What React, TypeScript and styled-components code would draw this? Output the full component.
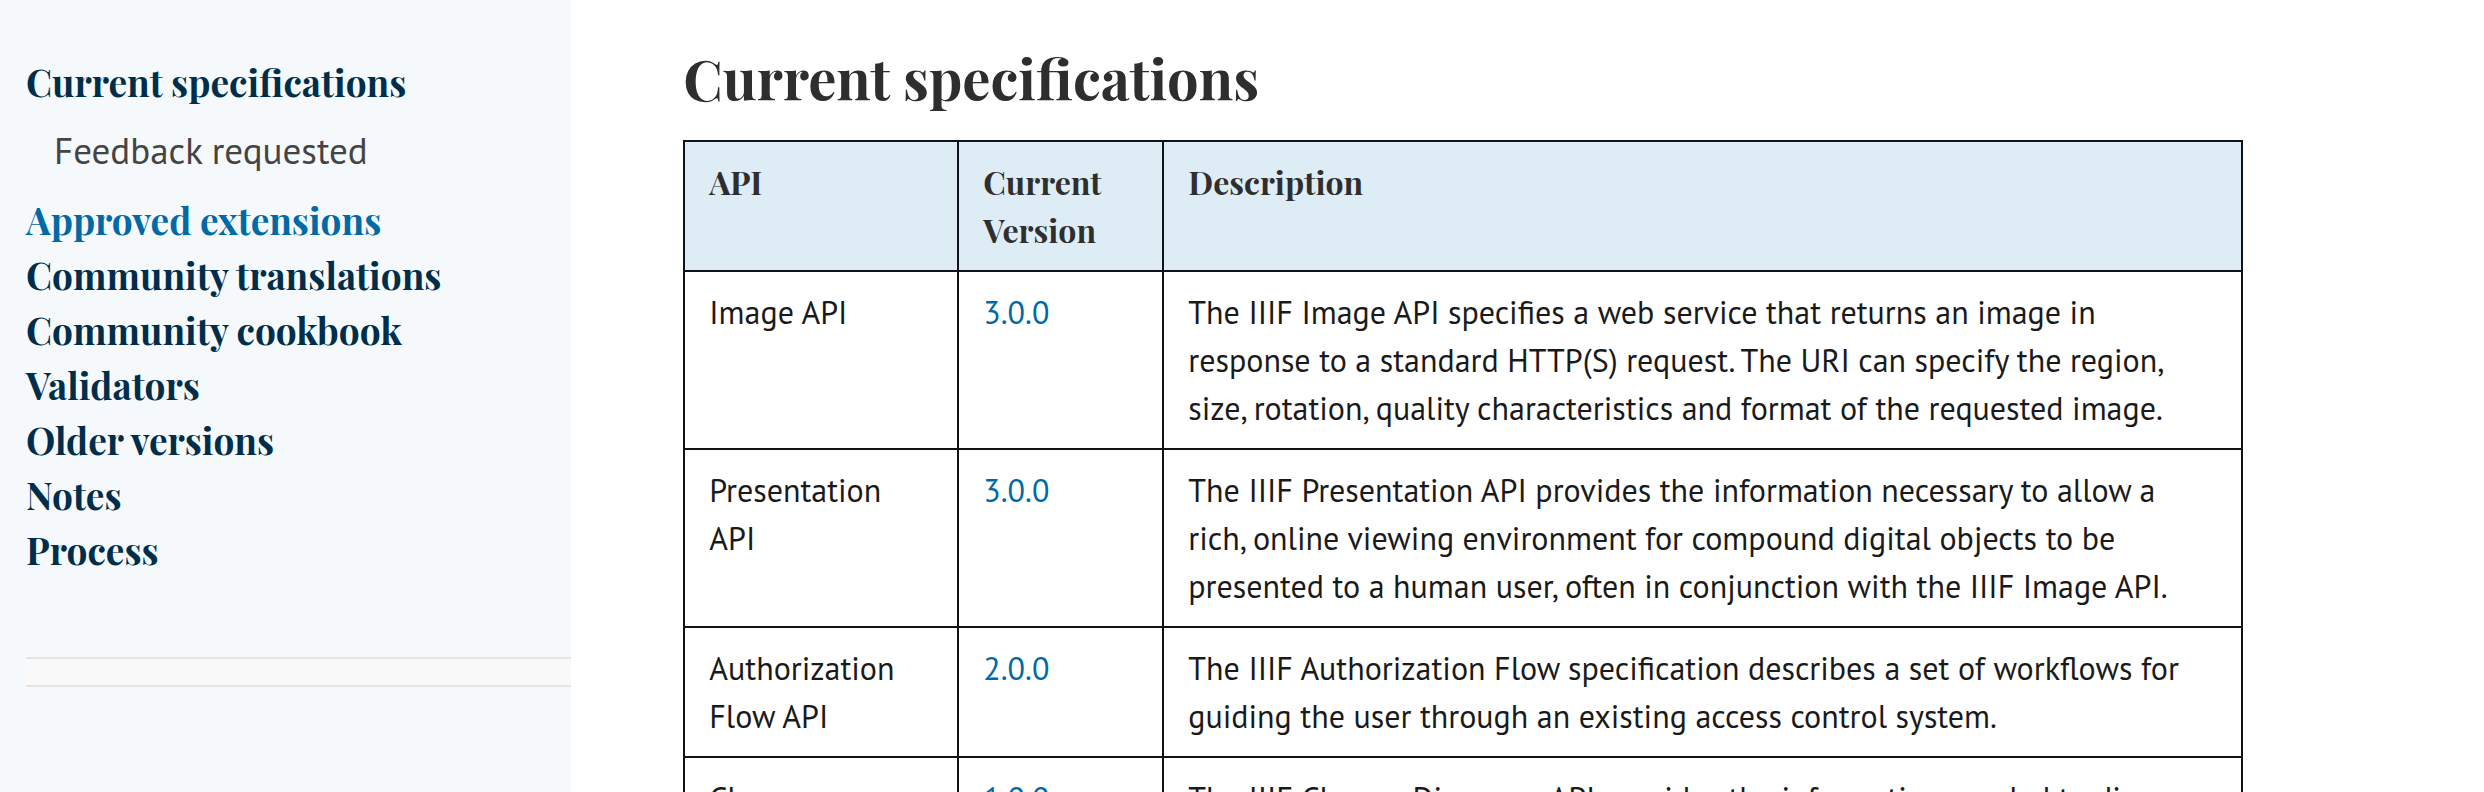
import React from "react";
import styled, { createGlobalStyle } from "styled-components";

const serif = `"Playfair Display", "Liberation Serif", serif`;
const sans = `"PT Sans", "Noto Sans", sans-serif`;

const GlobalStyle = createGlobalStyle`
  *, *::before, *::after { box-sizing: border-box; }
  body {
    margin: 0;
    background: #fff;
    color: #1a1a1a;
    font-family: ${sans};
  }
`;

const Page = styled.div`
  display: flex;
  height: 100vh;
  overflow: hidden;
`;

const Sidebar = styled.aside`
  flex: 0 0 23%;
  padding: 54px 0 0 26px;
  background: #f5f9fc;
`;

const NavList = styled.ul`
  margin: 0;
  padding: 0;
  list-style: none;
`;

const SubList = styled(NavList)`
  padding: 14px 0 14px 28px;
`;

const NavLink = styled.a<{ $active?: boolean }>`
  display: block;
  color: ${(p) => (p.$active ? "#0069a6" : "#002e4a")};
  font: 700 37px/55px ${serif};
  text-decoration: none;
`;

const SubLink = styled.a`
  display: block;
  color: #444;
  font-size: 37px;
  line-height: 55px;
  text-decoration: none;
`;

const Divider = styled.div`
  height: 30px;
  margin-top: 80px;
  border: solid #e3e5e5;
  border-width: 2px 0;
  background: #f9f9f9;
`;

const Main = styled.main`
  flex: 1;
  min-width: 0;
  padding: 42px 112px 0;
`;

const Title = styled.h1`
  margin: 0 0 26px;
  color: #2e2e2e;
  font: 700 56px/72px ${serif};
`;

const SpecTable = styled.table`
  width: 100%;
  max-width: 1560px;
  border-collapse: collapse;
  table-layout: fixed;
`;

const HeadCell = styled.th<{ $width?: number }>`
  width: ${(p) => (p.$width ? `${p.$width}px` : "auto")};
  padding: 16px 24px;
  border: 2px solid #101418;
  background: #deecf6;
  color: #2e2e2e;
  font: 700 32px/48px ${serif};
  text-align: left;
  vertical-align: top;
`;

const Cell = styled.td`
  padding: 16px 24px;
  border: 2px solid #101418;
  font-size: 32px;
  line-height: 48px;
  vertical-align: top;
`;

const VersionLink = styled.a`
  color: #0069a6;
  text-decoration: none;
`;

const sections = [
  { label: "Current specifications", children: ["Feedback requested"] },
  { label: "Approved extensions", active: true },
  { label: "Community translations" },
  { label: "Community cookbook" },
  { label: "Validators" },
  { label: "Older versions" },
  { label: "Notes" },
  { label: "Process" },
];

const specs = [
  {
    name: "Image API",
    version: "3.0.0",
    description:
      "The IIIF Image API specifies a web service that returns an image in response to a standard HTTP(S) request. The URI can specify the region, size, rotation, quality characteristics and format of the requested image.",
  },
  {
    name: "Presentation API",
    version: "3.0.0",
    description:
      "The IIIF Presentation API provides the information necessary to allow a rich, online viewing environment for compound digital objects to be presented to a human user, often in conjunction with the IIIF Image API.",
  },
  {
    name: "Authorization Flow API",
    version: "2.0.0",
    description:
      "The IIIF Authorization Flow specification describes a set of workflows for guiding the user through an existing access control system.",
  },
  {
    name: "Change Discovery API",
    version: "1.0.0",
    description:
      "The IIIF Change Discovery API provides the information needed to discover and subsequently use IIIF resources.",
  },
];

export default function App() {
  return (
    <Page>
      <GlobalStyle />
      <Sidebar>
        <nav aria-label="Sections">
          <NavList>
            {sections.map((s) => (
              <li key={s.label}>
                <NavLink href="#" $active={s.active}>
                  {s.label}
                </NavLink>
                {s.children && (
                  <SubList>
                    {s.children.map((c) => (
                      <li key={c}>
                        <SubLink href="#">{c}</SubLink>
                      </li>
                    ))}
                  </SubList>
                )}
              </li>
            ))}
          </NavList>
        </nav>
        <Divider />
      </Sidebar>
      <Main>
        <Title>Current specifications</Title>
        <SpecTable>
          <thead>
            <tr>
              <HeadCell scope="col" $width={274}>API</HeadCell>
              <HeadCell scope="col" $width={205}>Current Version</HeadCell>
              <HeadCell scope="col">Description</HeadCell>
            </tr>
          </thead>
          <tbody>
            {specs.map((s) => (
              <tr key={s.name}>
                <Cell>{s.name}</Cell>
                <Cell>
                  <VersionLink href="#">{s.version}</VersionLink>
                </Cell>
                <Cell>{s.description}</Cell>
              </tr>
            ))}
          </tbody>
        </SpecTable>
      </Main>
    </Page>
  );
}
